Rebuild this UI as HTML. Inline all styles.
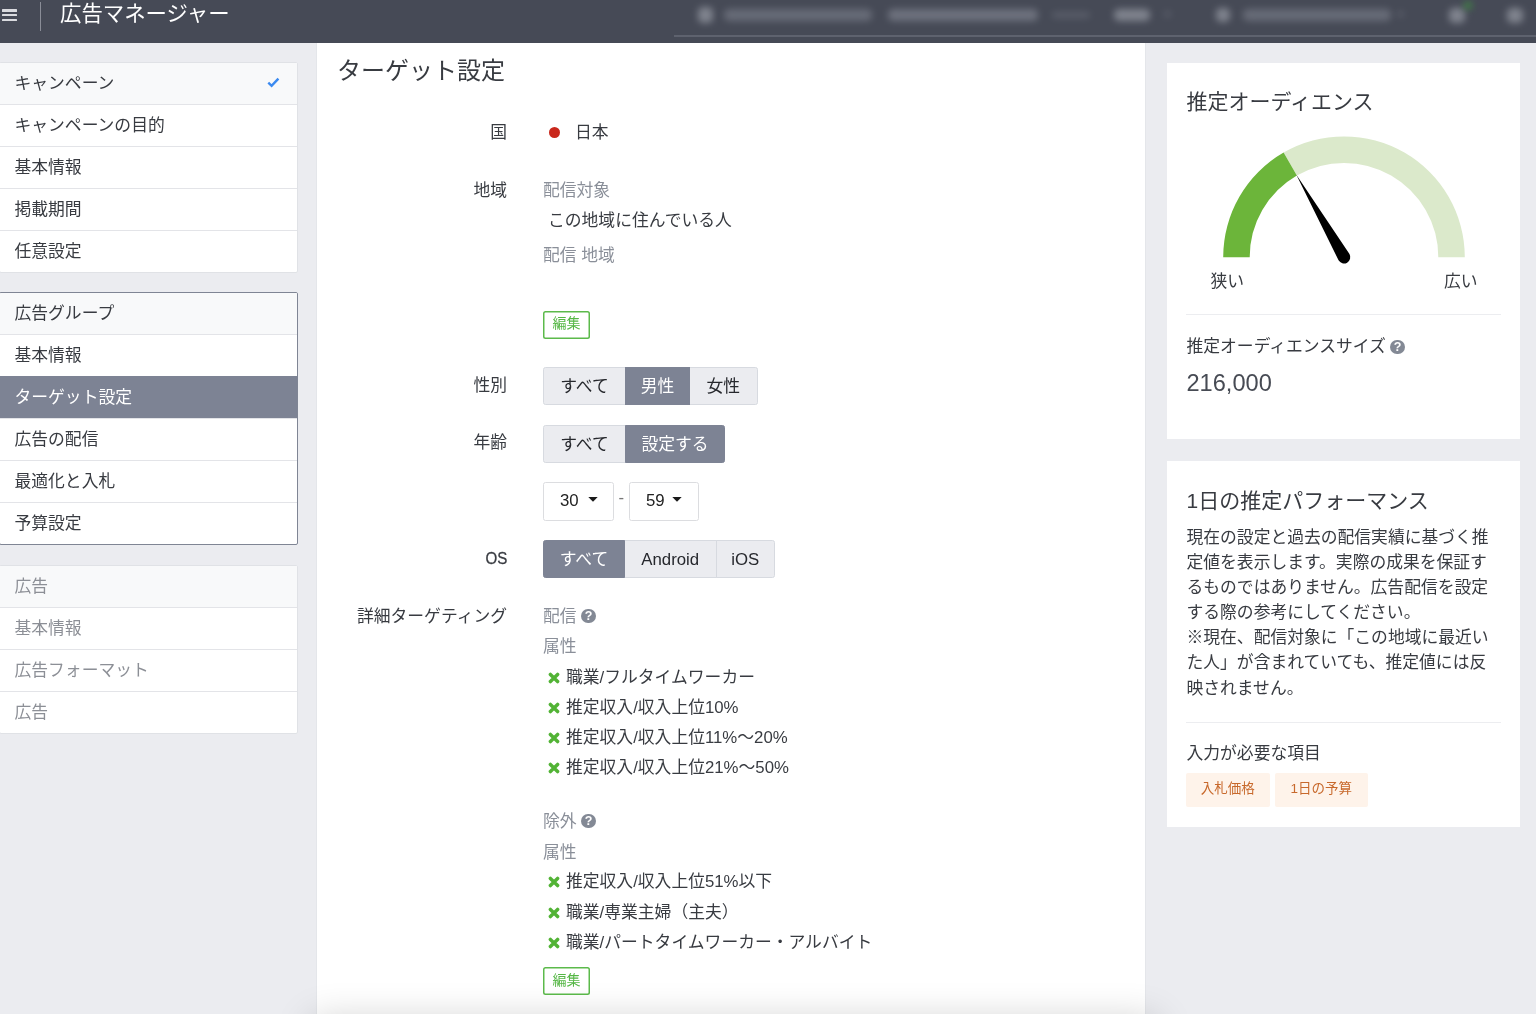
<!DOCTYPE html>
<html lang="ja">
<head>
<meta charset="utf-8">
<title>広告マネージャー</title>
<style>
*{box-sizing:border-box;margin:0;padding:0}
html,body{width:1536px;height:1014px;overflow:hidden}
body{position:relative;background:#ebecf0;font-family:"Liberation Sans","Noto Sans CJK JP",sans-serif;font-size:16.8px;color:#383b41;}
.abs{position:absolute}
/* header */
#hdr{will-change:transform;position:absolute;left:0;top:0;width:1536px;height:42.8px;background:#464a56;z-index:5}
#hdr .burger{position:absolute;left:2.2px;top:9px;width:14.8px;height:13px}
#hdr .burger i{position:absolute;left:0;width:14.8px;height:2.5px;background:#dadbdf;border-radius:.5px}
#hdr .vline{position:absolute;left:40px;top:2px;width:1px;height:29px;background:#8a8d97}
#hdr .title{position:absolute;left:60px;top:-2.5px;font-size:21.4px;line-height:32px;color:#fff;white-space:nowrap}
#hdr .uline{position:absolute;left:674px;top:34.6px;width:870px;height:2px;background:#5e626e;filter:blur(.6px)}
.blur{position:absolute;height:12px;border-radius:5px;background:#6f737f;filter:blur(3.5px);opacity:.8}
/* sidebar */
.grp{will-change:transform;position:absolute;left:-1px;width:298.5px;background:#fff;border:1px solid #e0e2e6;border-radius:2px;overflow:hidden}
.grp .row{height:42px;line-height:41px;padding-left:14.5px;border-top:1px solid #e3e4e8;white-space:nowrap;color:#383b41;position:relative}
.grp .row:first-child{border-top:0;background:#f8f9fa;height:41px}
.grp.dis .row{color:#8c8f96}
.grp .row.act{background:#7d8394;color:#fff;border-top-color:#7d8394}
/* main */
#main{position:absolute;left:317px;top:42px;width:827.5px;height:972px;will-change:transform;background:#fff;box-shadow:0 0 0 1px #e4e6ea}
#main h1{position:absolute;left:20px;top:9.1px;font-size:24px;font-weight:400;line-height:40px;color:#383b41;white-space:nowrap}
.lbl{position:absolute;right:637.5px;text-align:right;white-space:nowrap;line-height:24px;color:#383b41}
.val{position:absolute;left:226px;white-space:nowrap;line-height:24px}
.mut{color:#8a8f99}
.lbl,.val,.it{margin-top:.8px}
.bg{position:absolute;left:226px;height:38.4px;display:flex}
.bg span{display:block;height:38.4px;line-height:38px;text-align:center;background:#ebecf0;color:#26282d;border:1px solid #d7dae0;margin-left:-1px;white-space:nowrap;position:relative}
.bg span:first-child{margin-left:0;border-radius:2.5px 0 0 2.5px}
.bg span:last-child{border-radius:0 2.5px 2.5px 0}
.bg span.on{background:#7d8394;color:#fff;border-color:#7d8394;z-index:1}
.edit{position:absolute;left:226px;width:47px;height:28px;box-shadow:inset 0 0 0 1.5px #5cba4b;border-radius:2.5px;color:#55b745;font-size:14px;line-height:25px;text-align:center;background:#fff}
.sel{position:absolute;height:39px;border:1px solid #dcdde0;border-radius:2.5px;background:#fff;line-height:35.2px;color:#222;padding-left:16px;white-space:nowrap}
.sel svg{position:absolute;top:13.9px}
.it{position:absolute;left:249px;white-space:nowrap;line-height:24px;color:#383b41}
.sl{font-style:normal}
.x{position:absolute;left:231.1px;margin-top:.6px;width:12px;height:12px}
.q{position:absolute;width:14.4px;height:14.4px;margin:-1.2px 0 0 -.6px;border-radius:50%;background:#838995;color:#fff;font-size:12.5px;font-weight:700;line-height:15px;text-align:center;font-family:"Liberation Sans",sans-serif}
#fade{position:absolute;left:312px;top:1020px;width:845px;height:60px;box-shadow:0 0 38px rgba(0,0,0,.2)}
/* right */
.card{will-change:transform;position:absolute;left:1167px;width:353px;background:#fff}
.card h2{position:absolute;left:19.5px;font-size:21px;font-weight:400;line-height:30px;color:#383b41;white-space:nowrap}
.hr{position:absolute;left:18.5px;width:315.5px;height:1px;background:#ecedf0}
.tag{position:absolute;height:34.5px;line-height:31.5px;background:#fef3ea;color:#c8692c;font-size:13.5px;text-align:center;border-radius:2px;white-space:nowrap}
</style>
</head>
<body>
<div id="hdr">
  <div class="burger"><i style="top:0"></i><i style="top:4.75px"></i><i style="top:9.6px"></i></div>
  <div class="vline"></div>
  <div class="title">広告マネージャー</div>
  <div class="uline"></div>
  <div class="blur" style="left:698px;top:7px;width:15px;height:16px;background:#8d919b"></div>
  <div class="blur" style="left:724px;top:9px;width:148px"></div>
  <div class="blur" style="left:888px;top:9px;width:150px;background:#777b87"></div>
  <div class="blur" style="left:1052px;top:12px;width:38px;height:6px;opacity:.5"></div>
  <div class="blur" style="left:1114px;top:9px;width:36px;background:#8d919b"></div>
  <div class="blur" style="left:1164px;top:11px;width:7px;height:6px;opacity:.5"></div>
  <div class="blur" style="left:1216px;top:8px;width:14px;height:14px;background:#8d919b"></div>
  <div class="blur" style="left:1243px;top:9px;width:148px"></div>
  <div class="blur" style="left:1397px;top:11px;width:7px;height:6px;opacity:.5"></div>
  <div class="blur" style="left:1449px;top:8px;width:16px;height:15px;background:#8d919b"></div>
  <div class="blur" style="left:1464px;top:2px;width:8px;height:7px;background:#3f9a3f;opacity:.8"></div>
  <div class="blur" style="left:1507px;top:8px;width:16px;height:15px;background:#8d919b"></div>
</div>

<div class="grp" style="top:62px">
  <div class="row">キャンペーン<svg class="abs" style="left:267px;top:13.5px" width="13" height="11" viewBox="0 0 13 11"><path d="M1.3 5.6L4.6 8.8L11.4 1.6" fill="none" stroke="#3b8af0" stroke-width="2.4"/></svg></div>
  <div class="row">キャンペーンの目的</div>
  <div class="row">基本情報</div>
  <div class="row">掲載期間</div>
  <div class="row">任意設定</div>
</div>
<div class="grp" style="top:292px;border-color:#7f8594">
  <div class="row">広告グループ</div>
  <div class="row">基本情報</div>
  <div class="row act">ターゲット設定</div>
  <div class="row">広告の配信</div>
  <div class="row">最適化と入札</div>
  <div class="row">予算設定</div>
</div>
<div class="grp dis" style="top:565px">
  <div class="row">広告</div>
  <div class="row">基本情報</div>
  <div class="row">広告フォーマット</div>
  <div class="row">広告</div>
</div>

<div id="main">
  <h1>ターゲット設定</h1>
  <div class="lbl" style="top:78.5px">国</div>
  <div class="abs" style="left:232px;top:85px;width:11px;height:11px;border-radius:50%;background:#c9271c"></div>
  <div class="val" style="left:258px;top:78.5px">日本</div>

  <div class="lbl" style="top:136px">地域</div>
  <div class="val mut" style="top:136px">配信対象</div>
  <div class="val" style="left:231px;top:166.5px">この地域に住んでいる人</div>
  <div class="val mut" style="top:201.5px">配信 地域</div>
  <div class="edit" style="top:268.7px">編集</div>

  <div class="lbl" style="top:331.5px">性別</div>
  <div class="bg" style="top:324.8px"><span style="width:83px">すべて</span><span class="on" style="width:65px">男性</span><span style="width:68.6px">女性</span></div>

  <div class="lbl" style="top:388.2px">年齢</div>
  <div class="bg" style="top:382.9px"><span style="width:83px">すべて</span><span class="on" style="width:100px">設定する</span></div>

  <div class="sel" style="left:226px;top:440px;width:71px">30<svg style="left:43.6px" width="10" height="5" viewBox="0 0 10 5"><path d="M0.3 0H9.7L5 4.8Z" fill="#1a1a1a"/></svg></div>
  <div class="abs" style="left:301.5px;top:444px;line-height:24px;color:#777">-</div>
  <div class="sel" style="left:312px;top:440px;width:69.5px">59<svg style="left:42.3px" width="10" height="5" viewBox="0 0 10 5"><path d="M0.3 0H9.7L5 4.8Z" fill="#1a1a1a"/></svg></div>

  <div class="lbl" style="top:504px;transform:scaleX(.9);transform-origin:right center;-webkit-text-stroke:.3px #383b41">OS</div>
  <div class="bg" style="top:498px"><span class="on" style="width:82px">すべて</span><span style="width:92.5px;line-height:37px">Android</span><span style="width:59.3px;line-height:37px">iOS</span></div>

  <div class="lbl" style="top:562px">詳細ターゲティング</div>
  <div class="val mut" style="top:562px">配信</div>
  <div class="q" style="left:265px;top:568px">?</div>
  <div class="val mut" style="top:592.5px">属性</div>
  <svg class="x" style="top:629px" viewBox="0 0 12 12"><path d="M2.4 2.4L9.6 9.6M9.6 2.4L2.4 9.6" stroke="#52b335" stroke-width="3.5" stroke-linecap="round"/></svg>
  <div class="it" style="top:623px">職業<i class="sl">/</i>フルタイムワーカー</div>
  <svg class="x" style="top:659px" viewBox="0 0 12 12"><path d="M2.4 2.4L9.6 9.6M9.6 2.4L2.4 9.6" stroke="#52b335" stroke-width="3.5" stroke-linecap="round"/></svg>
  <div class="it" style="top:653px">推定収入<i class="sl">/</i>収入上位10%</div>
  <svg class="x" style="top:689px" viewBox="0 0 12 12"><path d="M2.4 2.4L9.6 9.6M9.6 2.4L2.4 9.6" stroke="#52b335" stroke-width="3.5" stroke-linecap="round"/></svg>
  <div class="it" style="top:683px">推定収入<i class="sl">/</i>収入上位11%〜20%</div>
  <svg class="x" style="top:719px" viewBox="0 0 12 12"><path d="M2.4 2.4L9.6 9.6M9.6 2.4L2.4 9.6" stroke="#52b335" stroke-width="3.5" stroke-linecap="round"/></svg>
  <div class="it" style="top:713.5px">推定収入<i class="sl">/</i>収入上位21%〜50%</div>

  <div class="val mut" style="top:767.5px">除外</div>
  <div class="q" style="left:265px;top:773px">?</div>
  <div class="val mut" style="top:798px">属性</div>
  <svg class="x" style="top:833.5px" viewBox="0 0 12 12"><path d="M2.4 2.4L9.6 9.6M9.6 2.4L2.4 9.6" stroke="#52b335" stroke-width="3.5" stroke-linecap="round"/></svg>
  <div class="it" style="top:827.5px">推定収入<i class="sl">/</i>収入上位51%以下</div>
  <svg class="x" style="top:864px" viewBox="0 0 12 12"><path d="M2.4 2.4L9.6 9.6M9.6 2.4L2.4 9.6" stroke="#52b335" stroke-width="3.5" stroke-linecap="round"/></svg>
  <div class="it" style="top:858px">職業<i class="sl">/</i>専業主婦（主夫）</div>
  <svg class="x" style="top:894.5px" viewBox="0 0 12 12"><path d="M2.4 2.4L9.6 9.6M9.6 2.4L2.4 9.6" stroke="#52b335" stroke-width="3.5" stroke-linecap="round"/></svg>
  <div class="it" style="top:888.5px">職業<i class="sl">/</i>パートタイムワーカー・アルバイト</div>
  <div class="edit" style="top:925.2px;line-height:27px">編集</div>
</div>

<div class="card" style="top:63px;height:376px">
  <h2 style="top:23.5px">推定オーディエンス</h2>
  <svg class="abs" style="left:0;top:0" width="353" height="376" viewBox="0 0 353 376">
    <path d="M116.60 89.58A120.8 120.8 0 0 1 297.80 194.20L271.30 194.20A94.3 94.3 0 0 0 129.85 112.53Z" fill="#dbe9cb"/>
    <path d="M56.20 194.20A120.8 120.8 0 0 1 116.60 89.58L129.85 112.53A94.3 94.3 0 0 0 82.70 194.20Z" fill="#6cb53a"/>
    <path d="M129.35 111.67L182.46 191.05A6.3 6.3 0 0 1 171.54 197.35Z" fill="#000"/>
  </svg>
  <div class="abs" style="left:43.5px;top:206.5px;line-height:24px;white-space:nowrap">狭い</div>
  <div class="abs" style="left:277px;top:206.5px;line-height:24px;white-space:nowrap">広い</div>
  <div class="hr" style="top:251px"></div>
  <div class="abs" style="left:19.5px;top:272.4px;line-height:24px;white-space:nowrap">推定オーディエンスサイズ</div>
  <div class="q" style="left:224px;top:277.7px">?</div>
  <div class="abs" style="left:19.5px;top:304px;font-size:23.6px;line-height:32px;color:#474b54;white-space:nowrap">216,000</div>
</div>
<div class="card" style="top:461px;height:366px">
  <h2 style="top:24.5px">1日の推定パフォーマンス</h2>
  <div class="abs" style="left:19.5px;top:64px;width:310px;line-height:25.1px;font-size:16.8px">現在の設定と過去の配信実績に基づく推定値を表示します。実際の成果を保証するものではありません。広告配信を設定する際の参考にしてください。<br>※現在、配信対象に「この地域に最近いた人」が含まれていても、推定値には反映されません。</div>
  <div class="hr" style="top:261px"></div>
  <div class="abs" style="left:19.5px;top:281px;line-height:24px;white-space:nowrap">入力が必要な項目</div>
  <div class="tag" style="left:18.5px;top:311.7px;width:84.5px">入札価格</div>
  <div class="tag" style="left:107.5px;top:311.7px;width:93.5px">1日の予算</div>
</div>
<div id="fade"></div>
</body>
</html>
